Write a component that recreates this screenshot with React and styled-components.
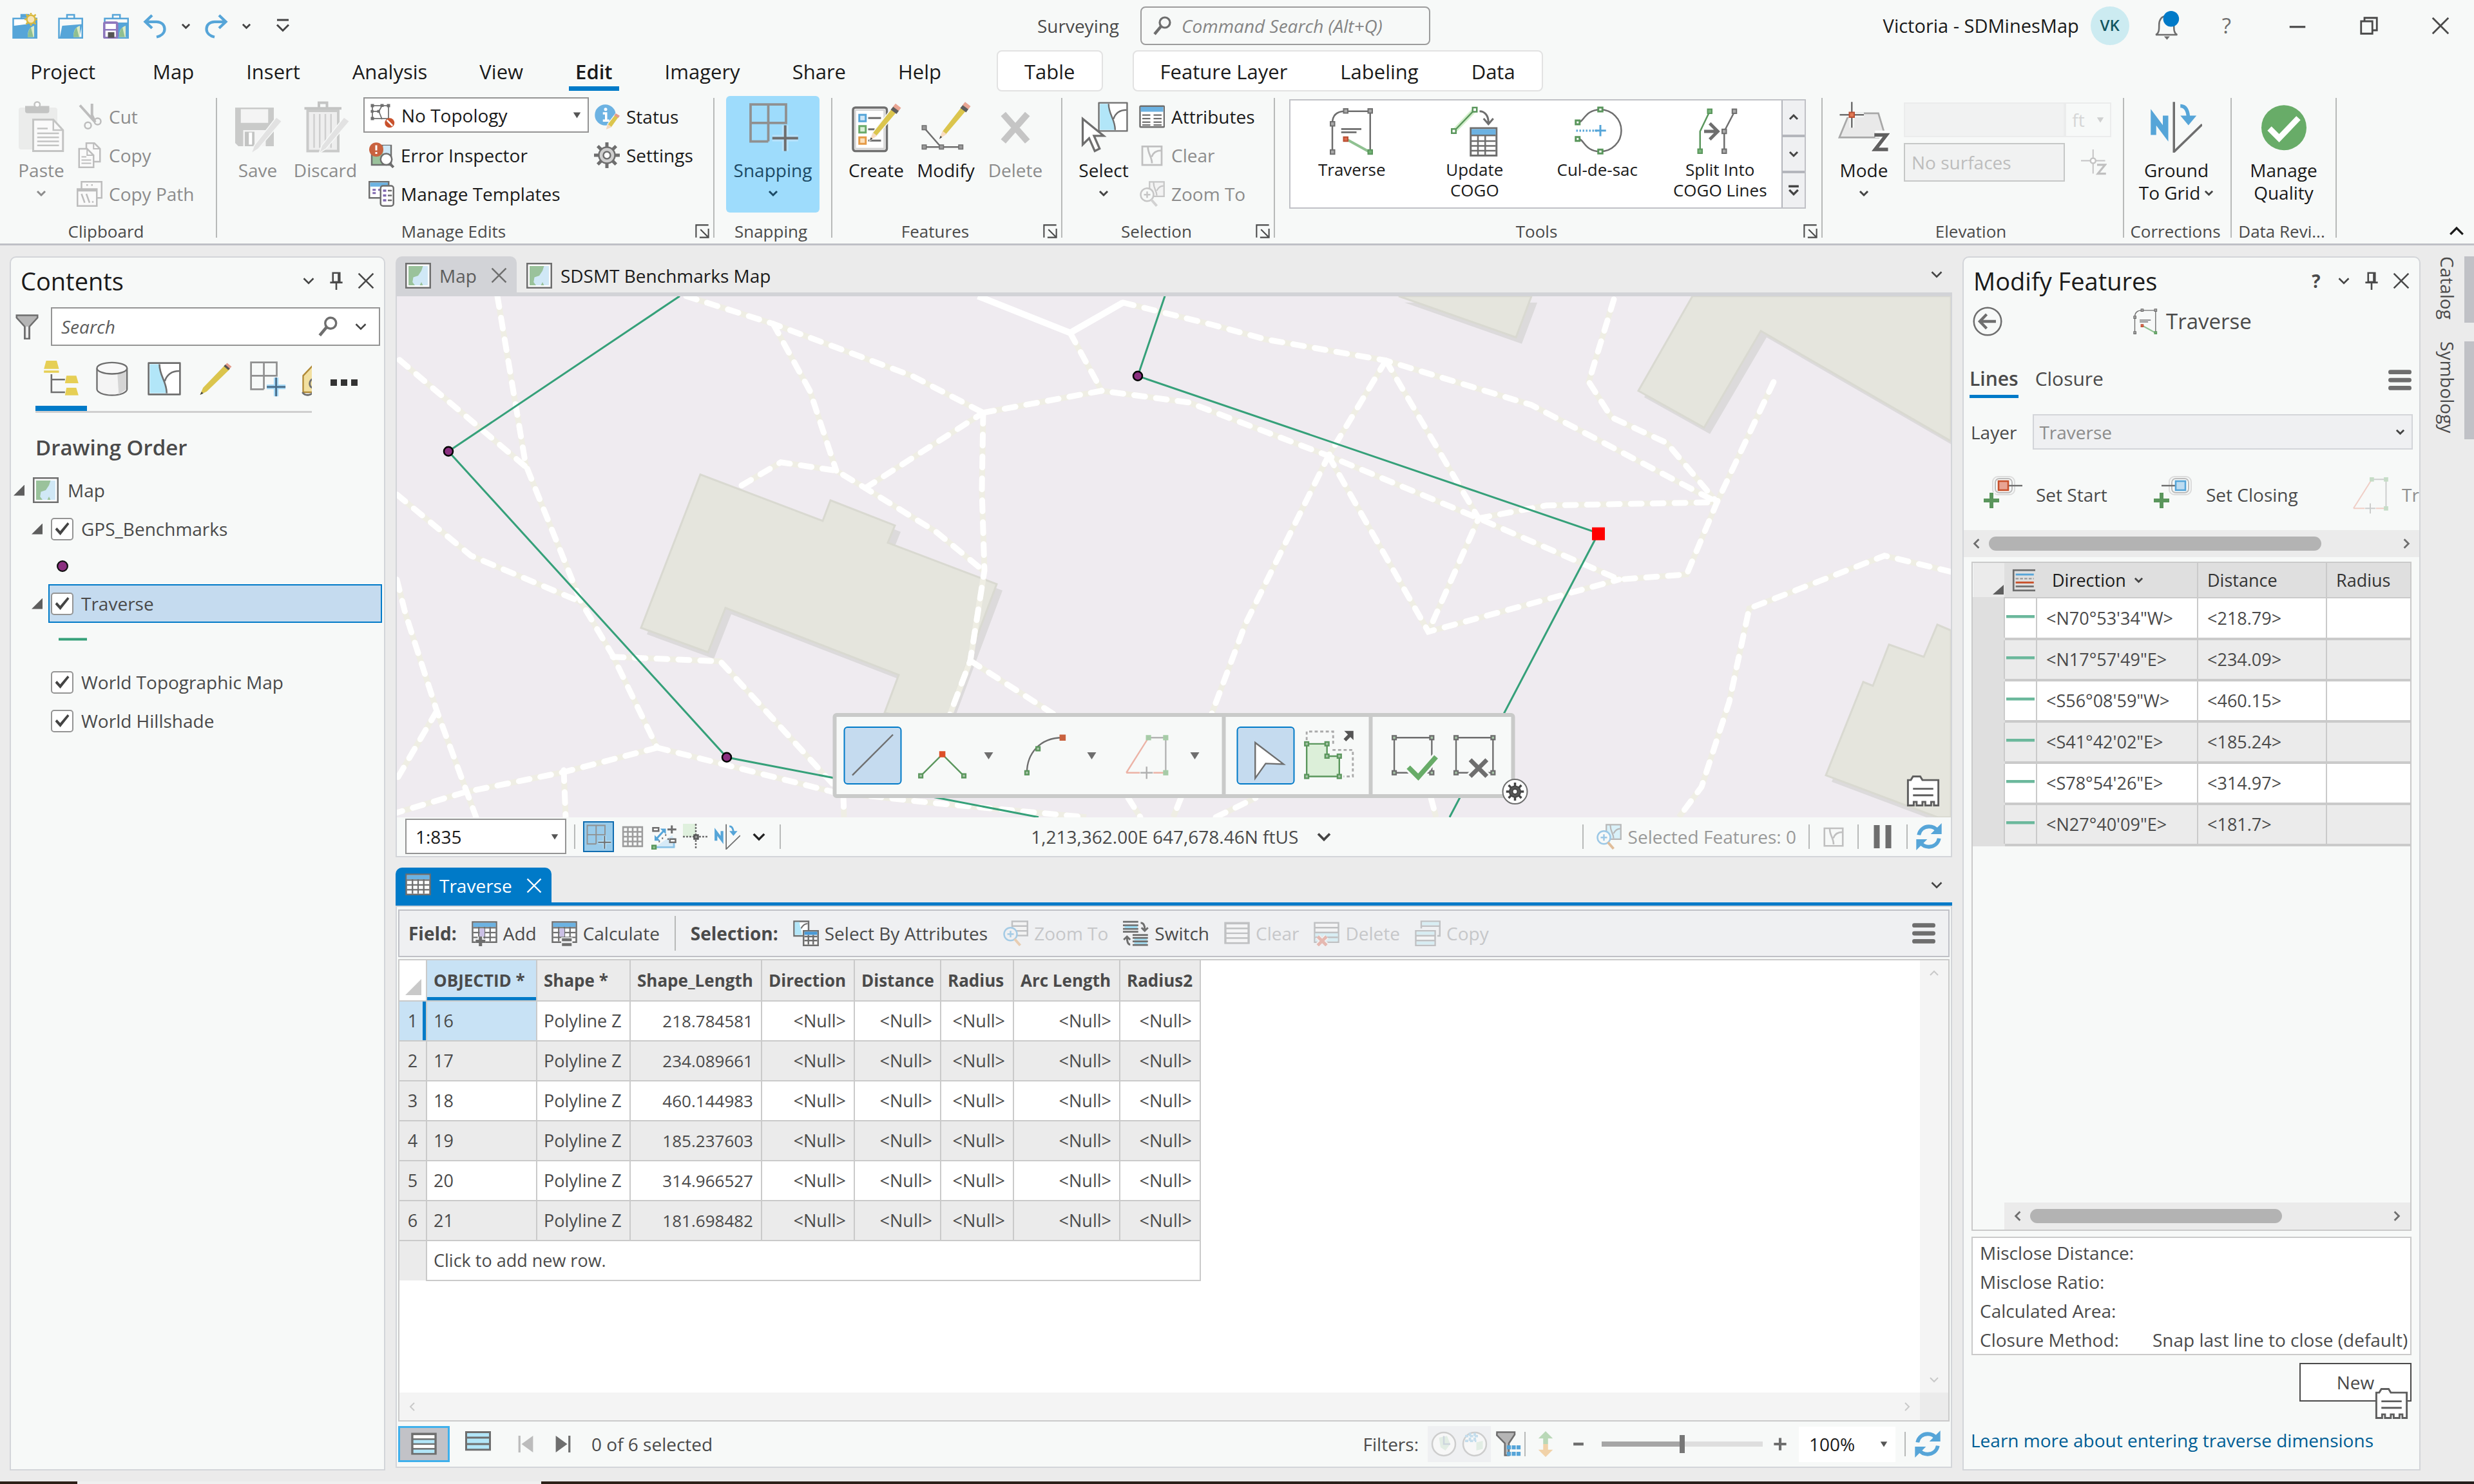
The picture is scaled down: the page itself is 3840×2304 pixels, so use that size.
import React from 'react';
import styled, { createGlobalStyle, css } from 'styled-components';

const G = '#6e6e6e';
const BLUE = '#007ac8';
const SKY = '#56a5d8';
const GREEN = '#5a965c';
const TEAL = '#35a079';

const GlobalStyle = createGlobalStyle`
  * { box-sizing: border-box; }
  body {
    margin: 0;
    background: #ebebeb;
    color: #4a4a4a;
    font-family: "Open Sans", "Noto Sans", sans-serif;
    font-size: 28px;
    line-height: 36px;
  }
  button, input, select {
    margin: 0;
    padding: 0;
    border: 0;
    background: none;
    color: inherit;
    font: inherit;
    white-space: nowrap;
  }
  svg { display: block; flex: none; }
`;

/* ---------- icons ---------- */

const IconSvg = styled.svg`
  width: ${p => p.$size}px;
  height: ${p => p.$size}px;
`;

const Icon = ({ size = 40, box = 16, children }) => (
  <IconSvg $size={size} viewBox={`0 0 ${box} ${box}`} fill="none" aria-hidden="true">{children}</IconSvg>
);

const Chevron = ({ size = 20, dir = 0, color = '#444', width = 2 }) => (
  <Icon size={size} box={16}>
    <path d="M2 5l6 6 6-6" stroke={color} strokeWidth={width} transform={`rotate(${dir} 8 8)`} />
  </Icon>
);
const Caret = ({ size = 14, color = '#555' }) => (
  <Icon size={size}><path d="M1 3h14l-7 11z" fill={color} /></Icon>
);
const Cross = ({ size = 26, color = '#4a4a4a' }) => (
  <Icon size={size}><path d="M1 1l14 14M15 1L1 15" stroke={color} strokeWidth="1.6" /></Icon>
);
const Pin = () => (
  <Icon size={28}><path d="M5 1h6v8H5zM2.500 9.500h11M8 9.500V16M10 1v8" stroke="#4a4a4a" strokeWidth="1.500" /></Icon>
);
const Magnifier = ({ size = 34 }) => (
  <Icon size={size}><circle cx="10" cy="5.500" r="4" stroke={G} strokeWidth="1.600" /><path d="M7 8.500L2 14.500" stroke={G} strokeWidth="2.200" /></Icon>
);
const MapIcon = ({ size = 40 }) => (
  <Icon size={size}>
    <path d="M.5.5h15v15H.5z" fill="#fff" stroke={G} />
    <path d="M2 2h12v12H2z" fill="#9ac29b" />
    <path d="M14 2h-3l-1 3-2 3-3 1-.5 3 1.500 2h3l1-2 1 2h3z" fill="#d0e8f6" />
  </Icon>
);
const Funnel = ({ size = 40 }) => (
  <Icon size={size}><path d="M1.500 1h13v1.500L9.500 8v7.500h-3V8l-5-5.500z" fill="#b5b5b5" stroke={G} /><path d="M7.500 8h1v7h-1z" fill="#fff" /></Icon>
);
const Hamburger = () => (
  <Icon size={36}><path d="M1.500 2.500h13M1.500 8h13M1.500 13.500h13" stroke={G} strokeWidth="3" strokeLinecap="round" /></Icon>
);
const Project = ({ kind }) => (
  <Icon>
    <path d="M6 3V1.200h4.500V3M1 3.500h14.500v12H1z" fill={kind === 'new' ? SKY : '#f7f9f8'} stroke={SKY} />
    {kind === 'open' && <path d="M3 8l12.500-1-2 8.500H1.500z" fill={SKY} />}
    {kind === 'save' && <path d="M8 6h7.500v9H8z" fill={SKY} />}
    <path d="M10 15c0-4 1-6 4-7v7z" fill="#dcebc6" /><path d="M10 15c0-3 1-5 2-6l1.500 6z" fill="#8fbf90" />
    {kind === 'new' && <g><path d="M1.500 4h8v3l-8 1z" fill="#fff" /><circle cx="12" cy="4" r="2.600" fill="#f8e5b5" stroke="#d9b93e" /><path d="M12 0v1M12 7v1M8 4h1M15 4h1M9 1l1 1M15 1l-1 1M9 7l1-1M15 7l-1-1" stroke="#d9b93e" /></g>}
    {kind === 'save' && <g><rect x=".7" y="6" width="8" height="9.500" rx=".8" fill="#fff" stroke="#8e78bd" strokeWidth="1.500" /><path d="M1 10.500h7.500" stroke="#8e78bd" /><path d="M3 12h4v3.500H3z" fill="#555" /></g>}
  </Icon>
);
const Undo = ({ flip }) => (
  <Icon size={40}><g transform={flip ? 'translate(16 0) scale(-1 1)' : ''}><path d="M6 1.500L1.800 5.500 6 9.500M2.300 5.500h6.500c3 0 5 2 5 4.500s-2 4.300-5 5" stroke={SKY} strokeWidth="1.700" /></g></Icon>
);
const Bell = () => (
  <Icon size={46} box={18}>
    <path d="M2 14.500c2-1 2-3 2-6 0-3 1.500-5.500 4.500-5.500s4.500 2.500 4.500 5.500c0 3 0 5 2 6z" stroke={G} strokeWidth="1" />
    <path d="M7 15.500h3.500l-1.700 2z" fill={G} /><circle cx="11.300" cy="4.800" r="4.800" fill={BLUE} />
  </Icon>
);
const Restore = () => <Icon size={28}><path d="M1 4h10v11H1zM4 4V1h11v11h-4" stroke="#4a4a4a" strokeWidth="1.600" /></Icon>;
const Launcher = () => <Icon size={22}><path d="M15 1H1v14M15 5v10H5M6 6l8 8" stroke="#4a4a4a" strokeWidth="1.500" /></Icon>;

const PencilShape = ({ faded }) => (
  <g>
    <path d="M27.500 2L31 4.500 16.500 21.500 12 24.500l1.800-5z" fill={faded ? '#e2e2e2' : '#dbc54d'} stroke="#f7f9f8" strokeWidth=".6" />
    {!faded && <g><path d="M26.300 3.600l3.600 2.600 1.500-2L28 1.500z" fill="#e9a593" /><path d="M25 5.300l3.600 2.700 1.400-1.900-3.500-2.600z" fill="#5e5e5e" /><path d="M14 19.500l2.500 2-4.500 3z" fill="#f8dcc0" /><path d="M12.700 22.500l1 .9-1.700 1.100z" fill="#444" /></g>}
  </g>
);
const PasteIcon = () => (
  <Icon size={80} box={32}>
    <rect x="2" y="4" width="24" height="26" rx="1.500" fill="#ebeceb" /><path d="M6 3h15v3q0 1.500-1.500 1.500h-12Q6 7.500 6 6z" fill="#c3c4c3" /><circle cx="13.500" cy="2.200" r="1.700" fill="#fff" stroke="#c3c4c3" />
    <path d="M11 11.500h12.500l6 6.500v13H11z" fill="#fafafa" stroke="#c3c4c3" strokeWidth="1.200" /><path d="M23.500 11.500V18h6M13.500 17H20M13.500 20H27M13.500 22.500H27M13.500 25H27M13.500 27.500H27" stroke="#c3c4c3" />
  </Icon>
);
const CutIcon = () => <Icon><path d="M2 1l9 10M9.500 0v7l2 4.500" stroke="#bdbdbd" strokeWidth="1.600" /><circle cx="7" cy="13.500" r="2" stroke="#bdbdbd" /><circle cx="13" cy="11" r="2" stroke="#bdbdbd" /></Icon>;
const CopyIcon = () => (
  <Icon><path d="M6 .5h5L14.500 4v8H6z" fill="#fafafa" stroke="#bdbdbd" /><path d="M1.500 4h5L10.500 8v7.500h-9z" fill="#fafafa" stroke="#bdbdbd" /><path d="M6.500 4v4h4M3 9h3M3 11h6M3 13h6M10.500.5V4h4" stroke="#bdbdbd" strokeWidth=".8" /></Icon>
);
const CopyPathIcon = () => (
  <Icon><path d="M3 .5h12.500v10H3z" fill="#fafafa" stroke="#bdbdbd" /><path d="M.5 5h12v10.500H.5zM.5 6h12" fill="#fafafa" stroke="#bdbdbd" /><path d="M3 8l2 5.500M6 8l2 5.500M9.500 13h1M6 2.500h1M9 2.500h1" stroke="#bdbdbd" /></Icon>
);
const SaveIcon = () => (
  <Icon size={80} box={32}>
    <path d="M2 4h24v24H4l-2-2z" fill="#c9cac9" /><path d="M5.500 5h17v8.500h-17zM7 18h14v10H7z" fill="#f4f4f4" /><path d="M8 19h6v9H8z" fill="#c3c4c3" /><path d="M10.500 19.500h2V27h-2z" fill="#fff" />
    <g transform="translate(0 8)"><PencilShape faded /></g>
  </Icon>
);
const DiscardIcon = () => (
  <Icon size={80} box={32}>
    <path d="M3 4.500h23M12 4V1h5v3" stroke="#c3c4c3" strokeWidth="1.600" /><path d="M5 6h19v25H5z" fill="#eee" stroke="#c9cac9" strokeWidth="1.600" /><path d="M9 8v21M12.500 8v21M16 8v21M19.500 8v21" stroke="#cfcfcf" />
    <g transform="translate(0 8)"><PencilShape faded /></g>
  </Icon>
);
const TopologyIcon = () => (
  <Icon><path d="M2 2h10v8H2zM2 5.500h4L8 2M6 5.500l2 5" stroke={G} strokeWidth=".7" /><path d="M1 1h2v2H1zM11 1h2v2h-2zM1 9h2v2H1zM1 4.700h1.700v1.700H1zM7 1h2v1.800H7zM5 4.700h1.700v1.700H5z" fill={G} /><circle cx="12.700" cy="12.700" r="3" fill="#c8512c" /><path d="M11 11l3.500 3.500" stroke="#fff" /></Icon>
);
const ErrorIcon = () => (
  <Icon><path d="M2 2h12v12H2z" fill="#9ac29b" stroke={G} /><path d="M9 2h4.500v6L9 9z" fill="#d0e8f6" /><circle cx="11" cy="10.500" r="3.500" fill="#fff" stroke={G} /><path d="M13 13l2.500 2.500" stroke={G} strokeWidth="1.600" /><circle cx="4.800" cy="4.500" r="4.400" fill="#c9623f" /><path d="M4.800 1.800V5M4.800 6v1.200" stroke="#fff" strokeWidth="1.200" /></Icon>
);
const TemplatesIcon = () => (
  <Icon><path d="M.5.5h12v10H.5z" fill="#fff" stroke={G} /><path d="M1 1h11v2.500H1z" fill="#6cb2e2" /><path d="M2.500 5.500h2M2.500 7.500h2M6 5.500h2" stroke="#8068b0" strokeWidth="1.200" /><rect x="7.500" y="3" width="8" height="12.500" rx="1.500" fill="#fff" stroke={G} /><path d="M9 6h2M9 9h2M9 12h2" stroke="#8068b0" strokeWidth="1.400" /><path d="M12 6h2.500M12 9h2.500M12 12h2.500" stroke={G} /></Icon>
);
const StatusIcon = () => (
  <Icon><circle cx="7" cy="7" r="6.500" fill="#6cb2e2" /><path d="M5.500 6H7.500v4.500M5.500 10.500h4" stroke="#fff" strokeWidth="1.400" /><circle cx="7.200" cy="3.500" r="1" fill="#fff" /><path d="M13.500 6l2.500 1.500-5 7-3.500 1.500 1-3.500z" fill="#dbc54d" stroke="#f7f9f8" strokeWidth=".5" /><path d="M13.500 6L16 7.500l-1 1.400-2.500-1.600z" fill="#e39b8a" /><path d="M8.500 12.500l2.500 2-3.500 1.500z" fill="#f6d9bd" /></Icon>
);
const Gear = ({ size = 40, fill = '#cfcfcf', stroke = G }) => (
  <Icon size={size}>
    <path d="M8 0v16M0 8h16M2.300 2.300l11.400 11.400M13.700 2.300L2.300 13.700" stroke={stroke} strokeWidth="2" /><circle cx="8" cy="8" r="5" fill={fill} stroke={stroke} /><circle cx="8" cy="8" r="2.200" fill="#fff" stroke={stroke} />
  </Icon>
);
const SnapIcon = ({ size = 80, plus = G, halo = '#b9e3fb' }) => (
  <Icon size={size} box={32}>
    <path d="M2 2h22v11.500H2zM13 2v23M2 13.500V25h11" stroke="#909090" strokeWidth="1.500" />
    <path d="M23.500 15v16M15.500 23h16" stroke={halo} strokeWidth="4" /><path d="M23.500 15v16M15.500 23h16" stroke={plus} strokeWidth="1.600" />
  </Icon>
);
const CreateIcon = () => (
  <Icon size={80} box={32}>
    <rect x="1.600" y="4" width="21" height="27" rx="1.500" fill="#fff" stroke={G} strokeWidth="1.400" /><rect x="3" y="5.500" width="18" height="24" stroke="#d5d5d5" />
    <rect x="5.500" y="8.500" width="4" height="4" fill="#cfe7f7" stroke={SKY} strokeWidth="1.200" /><rect x="5.500" y="15.500" width="4" height="4" fill="#d8efd6" stroke="#6aa968" strokeWidth="1.200" /><rect x="5.500" y="22.500" width="4" height="4" fill="#fbe0bb" stroke="#e59b47" strokeWidth="1.200" />
    <path d="M11 10.500h8M11 17.500h4M11 24.500h8" stroke={G} strokeWidth="1.200" /><PencilShape />
  </Icon>
);
const ModifyIcon = () => (
  <Icon size={80} box={32}>
    <path d="M2.500 16.500L13 28.500M2.500 28.500H25" stroke={G} /><path d="M1.300 15.200h2.600v2.600H1.300zM1.300 27.200h2.600v2.600H1.300zM12 27.200h2.600v2.600H12zM24 27.200h2.600v2.600H24z" fill="#999" stroke={G} strokeWidth=".6" /><g transform="translate(0 -1)"><PencilShape /></g>
  </Icon>
);
const DeleteIcon = () => <Icon size={80} box={32}><path d="M8.500 8l15 17M23.500 8l-15 17" stroke="#c5c5c5" strokeWidth="4" /></Icon>;
const SelectShape = () => (
  <g><path d="M1.500 1.500h13v13h-13z" fill="#fff" stroke={G} strokeWidth=".7" strokeLinejoin="round" /><path d="M2 2h4c0 5 3 7 3 12H2z" fill="#b2e6f8" /><path d="M6 2c0 5 3 7 3 12M8.200 9c1-3 3-4.200 6-4.200" stroke={G} strokeWidth=".7" /></g>
);
const SelectIcon = () => (
  <Icon size={80} box={32}><g transform="translate(11 -1) scale(1.350)"><SelectShape /></g><path d="M3 11v16l4-4 3.500 8 3-1.500L10 21.500h6z" fill="#fff" stroke={G} strokeWidth="1.300" /></Icon>
);
const AttributesIcon = () => (
  <Icon><rect x=".6" y="1.500" width="15" height="13" rx=".5" fill="#fff" stroke={G} /><path d="M1 2h14v3H1z" fill="#6cb2e2" /><path d="M2 7h5M9 7h5M2 9.200h5M9 9.200h5M2 11.400h5M9 11.400h5M2 13.200h5M9 13.200h5" stroke={G} strokeWidth=".9" /></Icon>
);
const ClearSelIcon = ({ size = 40 }) => (
  <Icon size={size}><path d="M2 2.500h12v11.500H2zM5.500 3c0 4 2.500 6 2.500 10M7.800 9c1-3 3-4 6-4" stroke="#c0c0c0" strokeWidth="1.100" /></Icon>
);
const ZoomToIcon = ({ color = '#c6c6c6', fill = '#f3f3f3', glass = '#c6c6c6', handle = '#d2d2d2' }) => (
  <Icon><path d="M6.500.5h9v9h-9zM9 1c0 4 2 5 2 8M11 6c1-2 2-3 4-3" fill={fill} stroke={color} strokeWidth=".9" /><circle cx="5" cy="8.500" r="4" fill="#f7f9f8" stroke={glass} /><path d="M5 6.500v4M3 8.500h4" stroke={glass} /><path d="M7.500 11.500l3.500 4" stroke={handle} strokeWidth="1.600" /></Icon>
);
const TraverseIcon = ({ size = 76 }) => (
  <Icon size={size} box={32}>
    <path d="M4 29V11q0-7.500 8-7.500h15.500V29" stroke={G} strokeWidth="1" /><path d="M13 21l14.500 8" stroke="#8fc191" strokeWidth="1.600" /><path d="M9.500 14.500H22M9.500 16.500H19" stroke={G} strokeWidth="1.100" />
    <path d="M2.800 10h2.600v2.600H2.800zM2.800 27.500h2.600v2.600H2.800zM11 2h2.600v2.600H11zM26.200 2h2.600v2.600h-2.600z" fill="#aaa" stroke={G} strokeWidth=".8" />
    <path d="M11 19.500h2.600v2.600H11z" fill="#dd6a4d" stroke="#b94f33" strokeWidth=".8" /><path d="M26.200 27.500h2.600v2.600h-2.600z" fill="#72b374" stroke={GREEN} strokeWidth=".8" />
  </Icon>
);
const CogoIcon = () => (
  <Icon size={80} box={32}>
    <path d="M3 16L16 2.500" stroke="#d3efcc" strokeWidth="3" /><path d="M3 16L16 2.500" stroke={GREEN} /><path d="M1.700 14.500h2.600v2.600H1.700zM14.700 1.200h2.600v2.600h-2.600z" fill="#fff" stroke={GREEN} />
    <path d="M19 3.500c3.500 0 5.500 3 5.500 7M21.500 8l3 3.500 3-3.500" stroke={G} strokeWidth="1.200" /><rect x="13.500" y="14" width="16" height="17" fill="#fff" stroke={G} strokeWidth="1.200" /><path d="M14 14.600h15V18H14z" fill="#6cb2e2" /><path d="M14 18.500h15M14 22h15M14 25h15M14 28h15M18 18v13M22.500 18v13" stroke={G} />
  </Icon>
);
const CulDeSacIcon = () => (
  <Icon size={80} box={32}>
    <path d="M4 10.500c4 0 4-8 14-8a13 13 0 0 1 0 26c-10 0-10-8-14-8" stroke={G} /><path d="M2.700 9.200h2.400v2.400H2.700zM2.700 19.500h2.400v2.400H2.700zM16.700 1.200h2.600v2.400h-2.600zM16.700 27.300h2.600v2.400h-2.600z" fill="#fff" stroke={GREEN} strokeWidth="1.200" />
    <path d="M3 15.500h13" stroke={SKY} strokeWidth="1.300" strokeDasharray="1 1" /><path d="M18 12v7M14.500 15.500h7" stroke={SKY} strokeWidth="1.200" />
  </Icon>
);
const SplitIcon = () => (
  <Icon size={80} box={32}>
    <path d="M9.500 3.500L3.500 16v13" stroke={GREEN} /><path d="M8.200 2.200h2.600v2.600H8.200zM2.200 27h2.600v2.600H2.200z" fill="#7bb77d" stroke={GREEN} strokeWidth=".8" />
    <path d="M25 3.500L18.500 16v13" stroke={G} /><path d="M23.500 2.200h2.600v2.600h-2.600zM17.200 14.700h2.600v2.600h-2.600zM17.200 27h2.600v2.600h-2.600z" fill="#aaa" stroke={G} strokeWidth=".8" /><path d="M6 16h8.500M9.500 11l5 5-5 5" stroke={G} strokeWidth="2" />
  </Icon>
);
const ModeIcon = () => (
  <Icon size={80} box={32}>
    <path d="M7 7.500h18l4.500 15H.8z" fill="#e9e9e9" stroke="#a8a8a8" strokeWidth="1.100" /><path d="M8.500.5v16M1 8.500h15" stroke="#f7f9f8" strokeWidth="3" /><path d="M8.500.5v16M1 8.500h15" stroke={G} /><path d="M7 7h3v3H7z" fill="#e07a55" stroke="#b94f33" strokeWidth=".8" />
    <path d="M23 20.500h7L23.500 30.500h7.500" stroke="#fff" strokeWidth="4.500" /><path d="M22.500 21h7.500L23 30h8" stroke="#606060" strokeWidth="2.200" />
  </Icon>
);
const ZPointIcon = () => <Icon><path d="M7.500 0v15M0 7h15" stroke="#c4c4c4" strokeWidth=".8" /><circle cx="7.500" cy="7" r="1.600" fill="#fff" stroke="#c4c4c4" /><path d="M10 9.500h5L10.500 15H15.500" stroke="#c0c0c0" strokeWidth="1.300" /></Icon>;
const NorthIcon = ({ size = 80 }) => (
  <Icon size={size} box={32}>
    <path d="M1.800 21V10l7.500 10V9" stroke={SKY} strokeWidth="3.400" /><path d="M14.500.5v31L32 14.500" stroke={G} strokeWidth="1.400" /><path d="M18.500 3c4 0 5 4 5 9" stroke={SKY} strokeWidth="2.200" /><path d="M18.500 9l5 6 5-6z" fill={SKY} />
  </Icon>
);
const QualityIcon = () => <Icon size={80} box={32}><circle cx="16" cy="16.500" r="14" fill="#68ac68" /><path d="M7 17l6 6L25 10.500" stroke="#fff" strokeWidth="3.600" /></Icon>;

const TreeIcon = () => (
  <Icon size={56} box={24}><path d="M2 0h7l1.500 5.500H.5zM.5 6.500h10V8H.5zM15.500 10H22l1.500 5H14.500zM15.500 18H22l1.500 5H14.500z" fill="#e6cf55" /><path d="M5.500 9v12h9M5.500 12.500h9" stroke={G} strokeWidth="1.100" /></Icon>
);
const CylinderIcon = () => (
  <Icon size={56} box={24}><path d="M1.500 5v14c0 2 4 4 10 4s10-2 10-4V5" fill="#f4f4f4" stroke={G} /><path d="M15 7l6-1.500V19l-5 3.500z" fill="#d5d5d5" /><ellipse cx="11.500" cy="5" rx="10" ry="3.800" fill="#f8f8f8" stroke={G} /></Icon>
);
const PencilIcon = () => <Icon size={56} box={24}><path d="M18 3l3.500 2.500L6 20.500l-4.500 2.200L3.500 18z" fill="#dbc54d" /><path d="M19.500 1.500L22.500 4 21 5.500 18 3z" fill="#e39b8a" /><path d="M17.300 3.600l3 2.600 1-1-3-2.600z" fill="#555" /><path d="M1.500 22.700l1-2 1.200 1z" fill="#444" /></Icon>;
const LabelIcon = () => <Icon size={56} box={24}><path d="M10 1L1.500 10v11h10l9-9V3z" fill="#f2e0a0" stroke="#b18a37" /><path d="M9 12c-4 0-4 6-1 6M8 12v8c0 3-5 4-7 1" stroke={G} strokeWidth="1.200" /></Icon>;

const SmallTable = ({ mark }) => (
  <Icon>
    <path d="M.6 1h14.800v12.500H.6z" fill="#fff" stroke={G} /><path d="M1 1.500h14V4H1z" fill="#6cb2e2" /><path d="M1 4.500h14M1 7.500h14M1 10.500h14M4.500 4v9M8 4v9M11.500 4v9" stroke={G} strokeWidth=".9" />
    {mark && <path d="M5 5h3v5H5z" fill="#cabfe4" />}
    {mark === 'add' && <path d="M5.500 10v6M2.500 13h6" stroke="#eff0f2" strokeWidth="3.500" />}
    {mark === 'add' && <path d="M5.500 10v6M2.500 13h6" stroke={G} strokeWidth="2" />}
    {mark === 'calc' && <path d="M6 10.500h7v6H6z" fill="#eff0f2" />}
    {mark === 'calc' && <path d="M6.500 12h6M6.500 15h6" stroke={G} strokeWidth="1.800" />}
  </Icon>
);
const SelectAttrIcon = () => (
  <Icon><path d="M.6.600h9v9h-9z" fill="#fff" stroke={G} /><path d="M1 1h3c0 3 1.500 5 1.500 8H1z" fill="#b2e6f8" /><path d="M5 5c1-2 2-3 4-3" stroke={G} strokeWidth=".8" /><path d="M6.500 6.500h9v9h-9z" fill="#fff" stroke={G} /><path d="M7 7h8v2H7z" fill="#4a9ad6" /><path d="M7 10h8M7 12.500h8M9.500 9v6M12.500 9v6" stroke={G} /></Icon>
);
const ZoomRowsIcon = () => (
  <Icon><path d="M6 .6h9.500v8.800H6zM6 3.500h9.500M6 6.500h9.500" fill="#f3f3f3" stroke="#c0c1c3" /><circle cx="5" cy="8.500" r="4" fill="#eff0f2" stroke="#a5cbe5" /><path d="M5 6.500v4M3 8.500h4" stroke="#a5cbe5" /><path d="M7.500 11.500l3.500 4" stroke="#e8cdb2" strokeWidth="1.600" /></Icon>
);
const SwitchIcon = () => (
  <Icon><path d="M0 .8h9.500M0 3h9.500M0 5.200h9.500M0 7h9.500" stroke={G} strokeWidth="1.100" /><path d="M1 3.500h8v1.300H1zM7 11h8v1.300H7zM7 13.400h8v1.300H7z" fill="#9fdcf2" /><path d="M6 9h9.500M6 10.800h9.500M6 13h9.500M6 15.200h9.500" stroke={G} strokeWidth="1.100" /><path d="M11 1.500c2 0 2.500 2 2.500 4M11.500 4.500l2 2 2-2M4.500 15C3 15 2.500 13 2.500 10M.5 12l2-2 2 2" stroke={G} strokeWidth="1.200" /></Icon>
);
const RowsIcon = ({ rows, color = G }) => (
  <Icon><path d="M.6 1.500h14.800v12.600H.6z" fill="#fff" stroke={color} />{rows.map((fill, i) => <rect key={i} x="1" y={2 + i * 3} width="14" height="3" fill={fill} stroke={color} strokeWidth=".9" />)}</Icon>
);
const DeleteRowsIcon = () => (
  <Icon><path d="M.6 1.500h14.800v12H.6zM.6 4.500h14.800M.6 7.500h14.800M.6 10.500h14.800" fill="#f4f4f5" stroke="#c0c1c3" /><path d="M1 8h14v5H1z" fill="#d8edf3" /><path d="M1 10.500h14" stroke="#c0c1c3" /><path d="M2.500 10l5.500 5.500M8 10l-5.500 5.500" stroke="#eff0f2" strokeWidth="3.500" /><path d="M2.500 10l5.500 5.500M8 10l-5.500 5.500" stroke="#e5b8b0" strokeWidth="1.900" /></Icon>
);
const CopyRowsIcon = () => (
  <Icon><path d="M4 5V.6h11.500v9H14M4 3.500h11.500" stroke="#c0c1c3" /><path d="M4.500 1h10.500v2H4.500z" fill="#d8edf3" /><path d="M.6 6.500h12v9H.6z" fill="#f4f4f5" stroke="#c0c1c3" /><path d="M1.100 7h11v2h-11zM1.100 13h11v2h-11z" fill="#d8edf3" /><path d="M.6 9.500h12M.6 12.500h12" stroke="#c0c1c3" /></Icon>
);
const RefreshIcon = () => (
  <Icon size={42}><path d="M2 7c.5-3 3-5 6-5 2.500 0 4 1 5 2.500" stroke={SKY} strokeWidth="2.200" /><path d="M15.500 0v6.500H9z" fill={SKY} /><path d="M14 9c-.5 3-3 5-6 5-2.500 0-4-1-5-2.500" stroke={SKY} strokeWidth="2.200" /><path d="M.5 16V9.500H7z" fill={SKY} /></Icon>
);
const NoteIcon = () => (
  <Icon size={54} box={24}><path d="M1.500 22V4.500h2L5 2h5l1.500 2.500h11V22h-3v-2.500h-2V22h-4v-2.500h-2V22h-4v-2.500h-2V22z" fill="#fff" stroke="#5e5e5e" strokeWidth="1.300" /><path d="M5 10.500h14M5 15h14" stroke="#5e5e5e" strokeWidth="1.300" /></Icon>
);
const GridIcon = () => <Icon size={34}><path d="M1 1h14v14H1zM4.500 1v14M8 1v14M11.500 1v14M1 4.500h14M1 8h14M1 11.500h14" stroke="#9c9c9c" strokeWidth="1.200" /></Icon>;
const DynamicIcon = () => (
  <Icon><path d="M1.500 15L13 7l2 7.500z" fill="#d6eaf7" /><path d="M14 9v5.500H3" stroke="#8cc3e6" strokeWidth="1.100" /><path d="M1 2.500h3.500v2H1zM11.500 9.500H15v2h-3.500z" fill="#fff" stroke={G} /><path d="M10 3.500h5.500M12.700 1v5" stroke={G} strokeWidth="1.200" /><path d="M3 9.500L8 4" stroke={SKY} strokeWidth="1.200" /><path d="M5.500 3H9v3.500zM2 7v3.500h3.500z" fill={SKY} /><path d="M4.500 11h.8M6.500 9h.8M8.500 7h.8M10 9.500h.8" stroke={G} /><path d="M.5 13.500h2.300v2.300H.5z" fill="#8cc08d" stroke={GREEN} /></Icon>
);
const ConstraintIcon = () => <Icon><path d="M0 0h8v8H0z" fill="#dff0dd" /><path d="M8 0v16M0 8h16" stroke={G} strokeDasharray="1.200 .8" /><path d="M7 7h2.400v2.400H7z" fill="#999" stroke="#555" /></Icon>;

/* ---------- title bar and ribbon ---------- */

const Window = styled.div`
  height: 100vh;
  display: flex;
  flex-direction: column;
`;

const TitleBar = styled.header`
  display: grid;
  grid-template-columns: 1fr auto 1fr;
  align-items: center;
  height: 78px;
  padding: 2px 38px 0 18px;
  background: #f7f9f8;
`;

const QuickAccess = styled.div`
  display: flex;
  align-items: center;
  gap: 15px;
`;

const PlainButton = styled.button`
  display: flex;
  align-items: center;
  justify-content: center;
  min-width: ${p => p.$width || 0}px;
`;

const QuickProjects = styled.div`
  display: flex;
  gap: 31px;
  margin-right: 6px;
`;

const TitleCenter = styled.div`
  display: flex;
  align-items: center;
  gap: 33px;
  margin-left: 10px;
`;

const CommandSearch = styled.label`
  display: flex;
  align-items: center;
  gap: 14px;
  width: 450px;
  height: 60px;
  padding: 0 16px;
  border: 2px solid #9c9c9c;
  border-radius: 8px;

  input {
    width: 100%;
    min-width: 0;
    outline: 0;
  }
  input::placeholder {
    color: #858585;
    font-style: italic;
    opacity: 1;
  }
`;

const TitleRight = styled.div`
  display: flex;
  align-items: center;
  justify-content: flex-end;
  color: #1a1a1a;
  font-size: 29px;
`;

const Avatar = styled.span`
  width: 60px;
  height: 60px;
  margin: 0 36px 0 18px;
  border-radius: 50%;
  background: #ccebf1;
  color: #11555f;
  font-size: 24px;
  font-weight: 600;
  line-height: 58px;
  text-align: center;
`;

const WindowControls = styled.div`
  display: flex;
  align-items: center;
  margin-left: 62px;
  gap: 83px;
  color: #6e6e6e;
  font-size: 33px;

  > :first-child { margin-right: 6px; }
`;

const TabStrip = styled.nav`
  display: flex;
  align-items: flex-start;
  height: 71px;
  padding-left: 37px;
  gap: 61px;
  background: #f7f9f8;
  color: #1a1a1a;
  font-size: 31px;

  > :first-child { margin-right: 8px; }
`;

const RibbonTab = styled.button`
  height: 63px;
  padding: 11px 10px 0;
  border-bottom: 7px solid transparent;
  line-height: 45px;
  ${p => p.$active && css`
    border-color: ${BLUE};
    font-weight: 600;
  `}
`;

const TabGroup = styled.div`
  display: flex;
  gap: 62px;
  height: 64px;
  margin-left: ${p => p.$left}px;
  padding: 0 31px;
  background: #fff;
  border: 2px solid #e2e2e2;
  border-radius: 8px;

  > button { margin-top: -2px; }
`;

const Ribbon = styled.section`
  display: flex;
  height: 232px;
  background: #f7f9f8;
  border-bottom: 3px solid #bfc0c6;
  color: #1a1a1a;
`;

const GroupBox = styled.div`
  display: flex;
  flex-direction: column;
  flex: none;
  width: ${p => p.$width}px;
`;

const GroupBody = styled.div`
  display: flex;
  align-items: flex-start;
  height: 183px;
  padding-left: ${p => p.$pad}px;
`;

const GroupLabel = styled.div`
  display: flex;
  align-items: center;
  height: 46px;
  padding: 8px 6px 0 0;
  color: #4a4a4a;
  font-size: 26px;

  span {
    flex: 1;
    text-align: center;
    white-space: nowrap;
  }
  button { margin-left: 8px; }
`;

const Separator = styled.div`
  flex: none;
  width: 2px;
  height: ${p => p.$height || 217}px;
  margin-top: ${p => (p.$height ? 0 : 3)}px;
  background: #b8bab9;
`;

const LargeButton = styled.button`
  display: flex;
  flex-direction: column;
  align-items: center;
  width: ${p => p.$width}px;
  padding-top: 8px;
  color: ${p => (p.disabled ? '#8c8c8c' : p.$active ? '#1c4a66' : '#1a1a1a')};
  line-height: 35px;
  white-space: pre-line;
  ${p => p.$active && css`
    height: 181px;
    background: #9edcfc;
    border-radius: 6px;
  `}

  > svg:first-child { margin-bottom: 10px; }
  > svg + svg { margin-top: 10px; }
`;

const InlineLabel = styled.span`
  display: flex;
  align-items: center;
  gap: 6px;
`;

const SmallColumn = styled.div`
  display: flex;
  flex-direction: column;
  padding-top: ${p => p.$top || 2}px;
  margin-left: ${p => p.$left || 0}px;
`;

const SmallButton = styled.button`
  display: flex;
  align-items: center;
  gap: 10px;
  height: 60px;
  padding-left: ${p => p.$pad || 0}px;
  color: ${p => (p.disabled ? '#8c8c8c' : '#1a1a1a')};
`;

const SelectBox = styled.div`
  display: flex;
  align-items: center;
  gap: 10px;
  width: ${p => (p.$width ? `${p.$width}px` : 'auto')};
  flex: ${p => (p.$width ? 'none' : 1)};
  height: 55px;
  padding: 0 10px 0 ${p => p.$pad || 8}px;
  background: ${p => p.$bg || '#fff'};
  border: 2px solid ${p => p.$border || '#949494'};
  color: ${p => p.$color || '#1a1a1a'};

  select {
    flex: 1;
    min-width: 0;
    appearance: none;
    opacity: 1;
  }
`;

const TopologySlot = styled.div`
  height: 60px;
`;

const Gallery = styled.div`
  display: flex;
  width: 802px;
  height: 170px;
  margin-top: 5px;
  background: #fff;
  border: 2px solid #c0c1c6;
`;

const GalleryItem = styled.button`
  display: flex;
  flex-direction: column;
  align-items: center;
  flex: 1;
  padding-top: 8px;
  font-size: 26px;
  line-height: 32px;
  white-space: pre-line;

  svg { margin-bottom: 3px; }
`;

const GallerySide = styled.div`
  display: grid;
  grid-template-rows: 1fr 1fr 1fr;
  gap: 4px;
  width: 36px;
  border-left: 2px solid #b4b6bc;
  background: #b4b6bc;

  button {
    display: grid;
    place-content: center;
    justify-items: center;
    background: #eff0f2;
  }
`;

const FieldRow = styled.div`
  display: flex;
  align-items: center;

  & + & { margin-top: 9px; }
`;

const ElevationInput = styled.input`
  width: 250px;
  height: ${p => p.$height}px;
  padding-left: 10px;
  border: 2px solid ${p => p.$border};
  background: #f1f2f2;

  &::placeholder { color: #bdbdbd; opacity: 1; }
`;

const UnitBox = styled.div`
  display: flex;
  align-items: center;
  justify-content: center;
  gap: 18px;
  width: 72px;
  height: 54px;
  border: 2px solid #ebecec;
  color: #d5d6d6;
`;

const CollapseButton = styled.button`
  align-self: flex-end;
  margin: 0 14px 6px auto;
`;

function RibbonGroup({ width, pad = 0, label, launcher, children }) {
  return (
    <>
      <GroupBox $width={width}>
        <GroupBody $pad={pad}>{children}</GroupBody>
        <GroupLabel>
          <span>{label}</span>
          {launcher && <PlainButton aria-label={`${label} options`}><Launcher /></PlainButton>}
        </GroupLabel>
      </GroupBox>
      <Separator />
    </>
  );
}

function Header() {
  return (
    <>
      <TitleBar>
        <QuickAccess>
          <QuickProjects>
            <PlainButton aria-label="New project"><Project kind="new" /></PlainButton>
            <PlainButton aria-label="Open project"><Project kind="open" /></PlainButton>
            <PlainButton aria-label="Save project"><Project kind="save" /></PlainButton>
          </QuickProjects>
          <PlainButton aria-label="Undo"><Undo /></PlainButton>
          <PlainButton aria-label="Undo list" $width={24}><Chevron size={15} width={3} /></PlainButton>
          <PlainButton aria-label="Redo"><Undo flip /></PlainButton>
          <PlainButton aria-label="Redo list" $width={24}><Chevron size={15} width={3} /></PlainButton>
          <PlainButton aria-label="Customize" $width={60}>
            <Icon size={24}><path d="M2 2h12M2 7l6 6 6-6" stroke="#444" strokeWidth="2" /></Icon>
          </PlainButton>
        </QuickAccess>
        <TitleCenter>
          <span>Surveying</span>
          <CommandSearch>
            <Magnifier size={32} />
            <input aria-label="Command Search" placeholder="Command Search (Alt+Q)" />
          </CommandSearch>
        </TitleCenter>
        <TitleRight>
          <span>Victoria - SDMinesMap</span>
          <Avatar>VK</Avatar>
          <PlainButton aria-label="Notifications"><Bell /></PlainButton>
          <WindowControls>
            <PlainButton aria-label="Help">?</PlainButton>
            <PlainButton aria-label="Minimize"><Icon size={28}><path d="M1 9h14" stroke="#4a4a4a" strokeWidth="1.800" /></Icon></PlainButton>
            <PlainButton aria-label="Restore"><Restore /></PlainButton>
            <PlainButton aria-label="Close"><Cross size={28} /></PlainButton>
          </WindowControls>
        </TitleRight>
      </TitleBar>
      <TabStrip>
        {['Project', 'Map', 'Insert', 'Analysis', 'View', 'Edit', 'Imagery', 'Share', 'Help'].map(name => (
          <RibbonTab key={name} $active={name === 'Edit'}>{name}</RibbonTab>
        ))}
        <TabGroup $left={15}><RibbonTab>Table</RibbonTab></TabGroup>
        <TabGroup $left={-15}>
          <RibbonTab>Feature Layer</RibbonTab>
          <RibbonTab>Labeling</RibbonTab>
          <RibbonTab>Data</RibbonTab>
        </TabGroup>
      </TabStrip>
    </>
  );
}

function EditRibbon() {
  return (
    <Ribbon>
      <RibbonGroup width={335} pad={14} label="Clipboard">
        <LargeButton disabled $width={100}><PasteIcon />Paste<Chevron size={16} width={3} color="#8c8c8c" /></LargeButton>
        <SmallColumn $left={5}>
          <SmallButton disabled><CutIcon />Cut</SmallButton>
          <SmallButton disabled><CopyIcon />Copy</SmallButton>
          <SmallButton disabled><CopyPathIcon />Copy Path</SmallButton>
        </SmallColumn>
      </RibbonGroup>
      <RibbonGroup width={770} pad={14} label="Manage Edits" launcher>
        <LargeButton disabled $width={98}><SaveIcon />Save</LargeButton>
        <LargeButton disabled $width={112}><DiscardIcon />Discard</LargeButton>
        <SmallColumn $left={3}>
          <TopologySlot>
            <SelectBox $width={350} $pad={7}>
              <TopologyIcon />
              <select aria-label="Topology" defaultValue="No Topology"><option>No Topology</option></select>
              <Caret size={13} />
            </SelectBox>
          </TopologySlot>
          <SmallButton $pad={8}><ErrorIcon />Error Inspector</SmallButton>
          <SmallButton $pad={8}><TemplatesIcon />Manage Templates</SmallButton>
        </SmallColumn>
        <SmallColumn $left={8}>
          <SmallButton><StatusIcon />Status</SmallButton>
          <SmallButton><Gear />Settings</SmallButton>
        </SmallColumn>
      </RibbonGroup>
      <RibbonGroup width={181} pad={18} label="Snapping">
        <LargeButton $active $width={145}><SnapIcon />Snapping<Chevron size={16} width={3} color="#1c4a66" /></LargeButton>
      </RibbonGroup>
      <RibbonGroup width={355} pad={14} label="Features" launcher>
        <LargeButton $width={108}><CreateIcon />Create</LargeButton>
        <LargeButton $width={108}><ModifyIcon />Modify</LargeButton>
        <LargeButton disabled $width={108}><DeleteIcon />Delete</LargeButton>
      </RibbonGroup>
      <RibbonGroup width={328} pad={14} label="Selection" launcher>
        <LargeButton $width={100}><SelectIcon />Select<Chevron size={16} width={3} /></LargeButton>
        <SmallColumn $left={5}>
          <SmallButton><AttributesIcon />Attributes</SmallButton>
          <SmallButton disabled><ClearSelIcon />Clear</SmallButton>
          <SmallButton disabled><ZoomToIcon />Zoom To</SmallButton>
        </SmallColumn>
      </RibbonGroup>
      <RibbonGroup width={848} pad={22} label="Tools" launcher>
        <Gallery>
          <GalleryItem><TraverseIcon size={80} />Traverse</GalleryItem>
          <GalleryItem><CogoIcon />{'Update\nCOGO'}</GalleryItem>
          <GalleryItem><CulDeSacIcon />Cul-de-sac</GalleryItem>
          <GalleryItem><SplitIcon />{'Split Into\nCOGO Lines'}</GalleryItem>
          <GallerySide>
            <button aria-label="Previous tools"><Chevron size={16} dir={180} width={3} /></button>
            <button aria-label="Next tools"><Chevron size={16} width={3} /></button>
            <button aria-label="All tools"><Icon size={18}><path d="M1 2h14M2 7l6 6 6-6" stroke="#444" strokeWidth="3" /></Icon></button>
          </GallerySide>
        </Gallery>
      </RibbonGroup>
      <RibbonGroup width={466} pad={14} label="Elevation">
        <LargeButton $width={100}><ModeIcon />Mode<Chevron size={16} width={3} /></LargeButton>
        <SmallColumn $left={12} $top={10}>
          <FieldRow>
            <ElevationInput disabled aria-label="Elevation" $height={54} $border="#ebecec" />
            <UnitBox><span>ft</span><Caret size={12} color="#cfd0d0" /></UnitBox>
          </FieldRow>
          <FieldRow>
            <ElevationInput disabled aria-label="Surface" placeholder="No surfaces" $height={60} $border="#c6c8c7" />
            <PlainButton disabled aria-label="Get Z from point" $width={90}><ZPointIcon /></PlainButton>
          </FieldRow>
        </SmallColumn>
      </RibbonGroup>
      <RibbonGroup width={165} label="Corrections">
        <LargeButton $width={162}><NorthIcon />Ground<InlineLabel>To Grid <Chevron size={15} width={3} /></InlineLabel></LargeButton>
      </RibbonGroup>
      <RibbonGroup width={161} label="Data Revi...">
        <LargeButton $width={161}><QualityIcon />{'Manage\nQuality'}</LargeButton>
      </RibbonGroup>
      <CollapseButton aria-label="Collapse ribbon"><Chevron size={26} dir={180} color="#1a1a1a" /></CollapseButton>
    </Ribbon>
  );
}

/* ---------- docks ---------- */

const Workspace = styled.main`
  flex: 1;
  min-height: 0;
  display: grid;
  grid-template-columns: 583px minmax(0, 1fr) 711px 67px;
  column-gap: 16px;
  padding: 17px 0 17px 15px;
`;

const Panel = styled.section`
  display: flex;
  flex-direction: column;
  min-height: 0;
  overflow: hidden;
  background: #f7f9f8;
  border: 2px solid #d3d5d9;
  border-radius: 10px 10px 0 0;
`;

const PanelTitle = styled.div`
  display: flex;
  align-items: center;
  height: 72px;
  padding: 0 ${p => p.$right}px 0 15px;

  h2 {
    flex: 1;
    margin: 0;
    color: #1a1a1a;
    font-size: 38px;
    font-weight: 400;
  }
  button { margin-left: 19px; }
`;

const SearchRow = styled.div`
  display: flex;
  align-items: center;
  gap: 17px;
  margin-top: 5px;
  padding: 0 6px 0 5px;
`;

const SearchBox = styled.label`
  display: flex;
  align-items: center;
  flex: 1;
  gap: 24px;
  height: 60px;
  padding: 0 18px 0 14px;
  background: #fff;
  border: 2px solid #949494;

  input {
    flex: 1;
    min-width: 0;
  }
  input::placeholder {
    color: #5c5c5c;
    font-style: italic;
    opacity: 1;
  }
`;

const ListModes = styled.div`
  display: flex;
  align-items: center;
  margin: 9px 0 0 38px;
`;

const ModeStrip = styled.div`
  display: flex;
  width: 429px;
  overflow: hidden;
  border-bottom: 3px solid #cfcfcf;
`;

const ListMode = styled.button`
  display: grid;
  flex: none;
  place-items: center;
  width: 80px;
  height: 92px;
  border-bottom: 8px solid ${p => (p.$active ? BLUE : 'transparent')};
`;

const Dots = styled.span`
  display: flex;
  gap: 6px;

  i {
    width: 10px;
    height: 10px;
    background: #333;
  }
`;

const TreeHeading = styled.h3`
  margin: 32px 0 14px 38px;
  font-size: 33px;
  font-weight: 600;
  line-height: 44px;
`;

const TreeRow = styled.div`
  display: flex;
  align-items: center;
  height: ${p => p.$height || 60}px;
  margin-right: 3px;
  padding-left: ${p => p.$indent || 0}px;
`;

const Twisty = styled.button`
  width: 17px;
  height: 17px;
  margin-right: ${p => p.$gap}px;
  background: ${p => (p.$hidden ? 'none' : '#5e5e5e')};
  clip-path: polygon(100% 0, 100% 100%, 0 100%);
`;

const LayerLabel = styled.label`
  display: flex;
  align-items: center;
  flex: 1;
  gap: 12px;
  height: 60px;
  padding-left: 2px;
  border: 2px solid ${p => (p.$selected ? BLUE : 'transparent')};
  background: ${p => (p.$selected ? '#c5dbef' : 'none')};
`;

const RootLabel = styled.span`
  margin-left: 14px;
`;

const Check = styled.input`
  appearance: none;
  display: grid;
  place-items: center;
  width: 35px;
  height: 35px;
  background: #fff;
  border: 2px solid #949494;
  border-radius: 5px;

  &:checked::after {
    content: "";
    width: 22px;
    height: 20px;
    background: #444;
    clip-path: polygon(0 55%, 13% 40%, 36% 68%, 88% 0, 100% 12%, 37% 100%);
  }
`;

function Layer({ name, selected, twisty }) {
  return (
    <TreeRow $indent={32}>
      <Twisty $gap={9} $hidden={!twisty} aria-label={`Expand ${name}`} disabled={!twisty} />
      <LayerLabel $selected={selected}><Check type="checkbox" defaultChecked />{name}</LayerLabel>
    </TreeRow>
  );
}

function Contents() {
  return (
    <Panel>
      <PanelTitle $right={15}>
        <h2>Contents</h2>
        <PlainButton aria-label="Options"><Chevron size={20} /></PlainButton>
        <PlainButton aria-label="Auto hide"><Pin /></PlainButton>
        <PlainButton aria-label="Close"><Cross size={26} /></PlainButton>
      </PanelTitle>
      <SearchRow>
        <PlainButton aria-label="Filter"><Funnel /></PlainButton>
        <SearchBox>
          <input aria-label="Search" placeholder="Search" />
          <Magnifier size={34} />
          <Chevron size={20} />
        </SearchBox>
      </SearchRow>
      <ListModes>
        <ModeStrip>
          <ListMode $active aria-label="Drawing order"><TreeIcon /></ListMode>
          <ListMode aria-label="Data source"><CylinderIcon /></ListMode>
          <ListMode aria-label="Selection"><Icon size={60}><SelectShape /></Icon></ListMode>
          <ListMode aria-label="Editing"><PencilIcon /></ListMode>
          <ListMode aria-label="Snapping"><SnapIcon size={58} plus="#4a6f8c" halo="#a9dcf9" /></ListMode>
          <ListMode aria-label="Labeling"><LabelIcon /></ListMode>
        </ModeStrip>
        <PlainButton aria-label="More" $width={100}><Dots><i /><i /><i /></Dots></PlainButton>
      </ListModes>
      <TreeHeading>Drawing Order</TreeHeading>
      <TreeRow $indent={4}><Twisty $gap={13} aria-label="Expand Map" /><MapIcon /><RootLabel>Map</RootLabel></TreeRow>
      <Layer name="GPS_Benchmarks" twisty />
      <TreeRow $height={56} $indent={71}><Icon size={18}><circle cx="8" cy="8" r="7" fill="#8b2f80" stroke="#111" strokeWidth="2" /></Icon></TreeRow>
      <Layer name="Traverse" selected twisty />
      <TreeRow $height={62} $indent={74}><Icon size={44}><path d="M0 6h16" stroke={TEAL} strokeWidth="1.500" /></Icon></TreeRow>
      <Layer name="World Topographic Map" />
      <Layer name="World Hillshade" />
    </Panel>
  );
}

const CenterColumn = styled.div`
  display: grid;
  grid-template-rows: minmax(0, 1fr) minmax(0, 1fr);
  row-gap: 16px;
  min-height: 0;
  padding-bottom: 4px;
`;

const Dock = styled.section`
  display: flex;
  flex-direction: column;
  min-height: 0;
`;

const DockTabs = styled.div`
  display: flex;
  height: ${p => p.$height}px;
  border-bottom: ${p => p.$line}px solid ${p => p.$color};
  padding-right: 14px;

  > :last-child { margin-left: auto; }
`;

const DockTab = styled.div`
  display: flex;
  align-items: center;
  padding: 3px 15px 0;
  border-radius: 10px 10px 0 0;
  background: ${p => p.$bg || 'none'};
  color: ${p => p.$color || '#1a1a1a'};

  > button:first-child {
    display: flex;
    align-items: center;
    gap: 13px;
  }
  > button + button { margin-left: 22px; }
`;

const MapFrame = styled.div`
  position: relative;
  flex: 1;
  min-height: 0;
  border: solid #d3d5d9;
  border-width: 0 2px;
  background: #efebf0;

  > svg {
    width: 100%;
    height: 100%;
  }
`;

const EditToolbar = styled.div`
  position: absolute;
  left: 50%;
  bottom: 30px;
  display: flex;
  height: 132px;
  transform: translateX(-50%);
  background: #f7f9f8;
  border: 6px solid #c9cac9;
  border-radius: 6px;
`;

const ToolSection = styled.div`
  display: flex;
  align-items: center;
  padding: 0 ${p => p.$right}px 0 ${p => p.$left}px;
  gap: ${p => p.$gap || 0}px;

  & + & { border-left: 6px solid #c9cac9; }
`;

const ToolGap = styled.i`
  width: ${p => p.$width}px;
`;

const Tool = styled.button`
  display: grid;
  place-items: center;
  width: 90px;
  height: 90px;
  border: 2px solid ${p => (p.$active ? BLUE : 'transparent')};
  border-radius: 6px;
  background: ${p => (p.$active ? '#c5dbef' : 'none')};
`;

const ToolOptions = styled.button`
  position: absolute;
  right: -26px;
  bottom: -16px;
  display: grid;
  place-items: center;
  width: 40px;
  height: 40px;
  background: #fff;
  border: 2px solid #6e6e6e;
  border-radius: 50%;
`;

const MapNote = styled.button`
  position: absolute;
  right: 16px;
  bottom: 14px;
`;

const StatusBar = styled.div`
  display: flex;
  align-items: center;
  height: 62px;
  padding: 0 13px;
  gap: 12px;
  background: #f7f9f8;
  border: 2px solid #d3d5d9;
  border-top: 0;
`;

const StatusTools = styled.div`
  display: flex;
  align-items: center;
  gap: 9px;
`;

const StatusToggle = styled.button`
  display: grid;
  place-items: center;
  width: ${p => (p.$active ? 48 : 40)}px;
  height: 48px;
  border: ${p => (p.$active ? '2px solid #0f6cb0' : 0)};
  background: ${p => (p.$active ? '#9acbea' : 'none')};
`;

const Coordinates = styled.div`
  display: flex;
  align-items: center;
  justify-content: center;
  flex: 1;
  gap: 28px;
`;

const Faded = styled.span`
  display: flex;
  align-items: center;
  gap: 10px;
  margin: 0 7px;
  color: #999;
`;

const paths = [
  'M772 459L816 721 902 934 951 1017 1020 1160',
  'M620 558L731 652 816 724',
  'M616 767L731 862 902 934',
  'M1065 459L1200 502 1416 583 1526 640',
  'M1200 502L1257 606 1298 730',
  'M1151 753L1212 717 1298 730 1343 757 1453 825 1526 885',
  'M1343 757L1526 640',
  'M1526 640L1524 761 1528 885 1506 1025 1473 1112',
  'M1506 1025L1637 1109',
  'M951 1019L1118 1026 1294 1218',
  'M1020 1160L1294 1229 1449 1246 1686 1268',
  'M1020 1160L875 1198 722 1229 616 1261',
  'M875 1195L878 1268',
  'M616 899L629 951 678 1103 739 1268',
  'M678 1103L616 1209',
  'M1309 1235L1310 1268',
  'M1743 469L1880 503 1964 526 2151 559 2377 628 2665 779',
  'M1661 516L1710 606',
  'M1526 640L1710 606 1845 624 2062 707 2295 804 2513 899 2618 891 2665 779 2754 590',
  'M2151 559L2062 707 1933 968 1879 1112',
  'M2151 559L2295 804 2217 980',
  'M2062 707L2217 980 2513 899',
  'M2295 804L2400 784 2665 779',
  'M2505 464L2466 592 2501 647 2587 687 2665 779',
  'M3028 887L2925 862 2715 944 2684 1089 2641 1221 2606 1268',
  'M1887 1268L1949 1238',
  'M2221 1238L2229 1268',
  'M1751 1238L1770 1268M1833 1238L1821 1268',
];

const buildings = [
  'M1087 736L1277 808 1289 776 1389 815 1378 842 1547 906 1465 1125 1373 1106 1395 1047 1126 943 1099 1012 995 974z',
  'M2171 459L2353 523 2377 459z',
  'M2627 459L2543 606 2645 663 2733 513 3028 684V459z',
  'M3028 978L3007 969 2986 1019 2932 1000 2907 1064 2892 1058 2834 1203 3007 1268H3028z',
];

const stations = [[696, 700], [1128, 1175], [1766, 583]];

const Nodes = ({ at, color = G }) => at.map(([x, y]) => (
  <rect key={`${x}-${y}`} x={x - 3} y={y - 3} width="6" height="6" fill="#a9c7aa" stroke={color} strokeWidth="2.500" />
));

function TraceShape() {
  return (
    <g>
      <path d="M7 73L43 16M7 73h22M51 73h20" stroke="#ecb3a6" strokeWidth="2.500" />
      <path d="M43 16h28v57" stroke="#b4b4b4" strokeWidth="2.500" />
      <path d="M40 63v20M30 73h20" stroke="#b0b0b0" strokeWidth="2.500" />
      <Nodes at={[[43, 16], [71, 16], [71, 73]]} color="#a6cda7" />
    </g>
  );
}

function MapView() {
  return (
    <Dock>
      <DockTabs $height={62} $line={6} $color="#d2d3d7">
        <DockTab $bg="#d2d3d7" $color="#5c5c5c">
          <button><MapIcon />Map</button>
          <PlainButton aria-label="Close Map"><Cross size={25} color="#6e6e6e" /></PlainButton>
        </DockTab>
        <DockTab><button><MapIcon />SDSMT Benchmarks Map</button></DockTab>
        <PlainButton aria-label="View list"><Chevron size={20} /></PlainButton>
      </DockTabs>
      <MapFrame>
        <svg viewBox="616 459 2412 809" preserveAspectRatio="xMidYMid slice" fill="none" role="img" aria-label="Campus map with traverse">
          {buildings.map(d => <path key={d} d={d} fill="#dcdadb" transform="translate(9 10)" />)}
          {buildings.map(d => <path key={d} d={d} fill="#e5e5dd" stroke="#d9d9d1" strokeWidth="3" />)}
          <g stroke="#efeee4" strokeWidth="9">{paths.map(d => <path key={d} d={d} />)}</g>
          <g stroke="#fff" strokeWidth="9" strokeLinecap="round" strokeDasharray="17 17">{paths.map(d => <path key={d} d={d} />)}</g>
          <path d="M1518 459L1661 516 1743 469" stroke="#fff" strokeWidth="10" />
          <path d="M1055 459L696 700 1128 1175 1294 1207 1612 1268M1808 459L1766 583 2481 827 2250 1268" stroke={TEAL} strokeWidth="3" />
          {stations.map(([x, y]) => <circle key={x} cx={x} cy={y} r="7" fill="#8b2f80" stroke="#000" strokeWidth="2.500" />)}
          <path d="M2471 818h20v20h-20z" fill="#f00" />
        </svg>
        <EditToolbar>
          <ToolSection $left={11} $right={27} $gap={10}>
            <Tool $active aria-label="Line"><Icon size={86} box={90}><path d="M12 77L78 11" stroke={G} strokeWidth="2.500" /></Icon></Tool>
            <ToolGap $width={0} />
            <Tool aria-label="Right angle line"><Icon size={86} box={90}><path d="M8 78l35-35 35 35" stroke={GREEN} strokeWidth="2.500" /><Nodes at={[[8, 78], [78, 78]]} color={GREEN} /><path d="M38 38h10v10H38z" fill="#dd4f28" /></Icon></Tool>
            <PlainButton aria-label="Line tools" $width={30}><Caret size={16} color={G} /></PlainButton>
            <ToolGap $width={10} />
            <Tool aria-label="Arc"><Icon size={86} box={90}><path d="M13 73c0-30 20-57 58-57" stroke={G} strokeWidth="2.500" /><Nodes at={[[13, 73], [31, 34]]} color={GREEN} /><path d="M66 11h10v10H66z" fill="#c9623f" /></Icon></Tool>
            <PlainButton aria-label="Arc tools" $width={30}><Caret size={16} color={G} /></PlainButton>
            <ToolGap $width={10} />
            <Tool aria-label="Trace"><Icon size={86} box={90}><TraceShape /></Icon></Tool>
            <PlainButton aria-label="Trace tools" $width={30}><Caret size={16} color={G} /></PlainButton>
          </ToolSection>
          <ToolSection $left={17} $right={16} $gap={9}>
            <Tool $active aria-label="Select vertex"><Icon size={86} box={90}><path d="M28 24l46 35-29-1-17 24z" fill="#fff" stroke={G} strokeWidth="2.500" /></Icon></Tool>
            <Tool aria-label="Reshape">
              <Icon size={86} box={90}>
                <path d="M8 20V6h43v20M50 36h33v43H68" stroke="#aaa" strokeWidth="3" strokeDasharray="5 4" />
                <path d="M8 26h33v20h20v33H8z" fill="#dcefd9" stroke={GREEN} strokeWidth="2.500" />
                <Nodes at={[[8, 26], [41, 26], [41, 46], [61, 46], [61, 79], [8, 79]]} color={GREEN} />
                <path d="M69 5h15v15l-5-5-7 7-4-4 7-7z" fill="#555" />
              </Icon>
            </Tool>
          </ToolSection>
          <ToolSection $left={22} $right={8} $gap={5}>
            <Tool aria-label="Finish"><Icon size={86} box={90}><path d="M10 16h61v57H10z" stroke={G} strokeWidth="2.500" /><Nodes at={[[10, 16], [71, 16], [10, 73], [71, 73]]} /><path d="M33 64l16 16 29-33" stroke="#f7f9f8" strokeWidth="14" /><path d="M33 64l16 16 29-33" stroke="#68ac68" strokeWidth="8" /></Icon></Tool>
            <Tool aria-label="Cancel"><Icon size={86} box={90}><path d="M11 16h60v57H11z" stroke={G} strokeWidth="2.500" /><Nodes at={[[11, 16], [71, 16], [11, 73], [71, 73]]} /><path d="M34 52l27 27M61 52L34 79" stroke="#f7f9f8" strokeWidth="13" /><path d="M34 52l27 27M61 52L34 79" stroke={G} strokeWidth="7" /></Icon></Tool>
          </ToolSection>
          <ToolOptions aria-label="Toolbar options"><Gear size={28} fill="#555" stroke="#444" /></ToolOptions>
        </EditToolbar>
        <MapNote aria-label="Map notes"><NoteIcon /></MapNote>
      </MapFrame>
      <StatusBar>
        <SelectBox $width={250} $pad={14}>
          <select aria-label="Map scale" defaultValue="1:835"><option>1:835</option></select>
          <Caret size={12} />
        </SelectBox>
        <Separator $height={38} />
        <StatusTools>
          <StatusToggle $active aria-label="Snapping"><SnapIcon size={40} /></StatusToggle>
          <StatusToggle aria-label="Grid"><GridIcon /></StatusToggle>
          <StatusToggle aria-label="Dynamic constraints"><DynamicIcon /></StatusToggle>
          <StatusToggle aria-label="Inference"><ConstraintIcon /></StatusToggle>
          <StatusToggle aria-label="Ground to grid"><NorthIcon size={40} /></StatusToggle>
          <PlainButton aria-label="More" $width={40}><Chevron size={22} width={2.5} color="#222" /></PlainButton>
        </StatusTools>
        <Separator $height={38} />
        <Coordinates>1,213,362.00E 647,678.46N ftUS<Chevron size={24} width={2.5} /></Coordinates>
        <Separator $height={38} />
        <Faded><ZoomToIcon color="#b8b8b8" fill="#d9f1f9" glass="#9cc8e6" handle="#e0bd9a" />Selected Features: 0</Faded>
        <Separator $height={38} />
        <PlainButton aria-label="Clear selection" $width={50}><ClearSelIcon size={38} /></PlainButton>
        <Separator $height={38} />
        <PlainButton aria-label="Pause" $width={50}><Icon size={36}><path d="M4 0v16M12 0v16" stroke={G} strokeWidth="4" /></Icon></PlainButton>
        <Separator $height={38} />
        <PlainButton aria-label="Refresh"><RefreshIcon /></PlainButton>
      </StatusBar>
    </Dock>
  );
}

/* ---------- attribute table ---------- */

const TableFrame = styled.div`
  display: flex;
  flex-direction: column;
  flex: 1;
  min-height: 0;
  padding: 4px 2px 0;
  background: #f7f9f8;
  border: 2px solid #d3d5d9;
`;

const TableToolbar = styled.div`
  display: flex;
  align-items: center;
  height: 74px;
  padding: 0 20px 0 14px;
  gap: 23px;
  background: #eff0f2;
  border: 2px solid #bfc0c6;

  > :last-child { margin-left: auto; }
`;

const TableAction = styled.button`
  display: flex;
  align-items: center;
  gap: 9px;
  color: ${p => (p.disabled ? '#c6c7c9' : '#4a4a4a')};
`;

const TableArea = styled.div`
  display: grid;
  grid-template-columns: minmax(0, 1fr) 44px;
  grid-template-rows: minmax(0, 1fr) 43px;
  flex: 1;
  min-height: 0;
  margin-top: 3px;
  background: #fff;
  border: 2px solid #cacaca;
`;

const ScrollBar = styled.div`
  display: flex;
  flex-direction: ${p => (p.$vertical ? 'column' : 'row')};
  align-items: center;
  justify-content: space-between;
  padding: ${p => (p.$vertical ? '12px 0' : '0 12px')};
  background: #f4f4f4;
`;

const ScrollCorner = styled.div`
  background: #ebebeb;
`;

const AttributeTable = styled.table`
  align-self: start;
  border-collapse: collapse;
  table-layout: fixed;
  width: 1243px;
  font-size: 27px;
  line-height: 36px;

  th, td {
    height: 62px;
    padding: 0 12px 0 10px;
    border: 2px solid #cacaca;
    text-align: right;
    white-space: nowrap;
  }
  thead th {
    height: 63px;
    padding: 0 5px 0 10px;
    background: #ebebeb;
    border-top: 0;
    font-size: 26px;
    font-weight: 700;
    text-align: left;
  }
  tr > :first-child { border-left: 0; }
  tbody tr:nth-child(even) { background: #ebebeb; }
  tbody th {
    padding: 0;
    background: #ebebeb;
    font-weight: 400;
    text-align: center;
  }
  td:nth-child(2), td:nth-child(3) {
    padding-right: 0;
    text-align: left;
  }
  td:nth-child(4) { font-size: 26px; }
  thead th.current {
    background: #c8e2f5;
    box-shadow: inset 0 -5px ${BLUE};
  }
  tbody th.current {
    background: #c8e2f5;
    box-shadow: inset -5px 0 ${BLUE};
  }
  td.current { background: #c8e2f5; }
  thead th.corner { background: #fff; padding: 0; }
  tfoot td { text-align: left; }
  tfoot th { background: #ebebeb; border-bottom: 0; }
`;

const CornerMark = styled.span`
  display: block;
  width: 25px;
  height: 25px;
  margin: 22px 0 0 9px;
  background: #c9c9c9;
  clip-path: polygon(100% 0, 100% 100%, 0 100%);
`;

const TableFooter = styled.footer`
  display: flex;
  align-items: center;
  height: 70px;
`;

const FooterButton = styled.button`
  display: grid;
  place-items: center;
  width: ${p => p.$width || 80}px;
  height: 56px;
  border: ${p => (p.$active ? '3px solid #3eb0ec' : 0)};
  background: ${p => (p.$active ? '#c2c2c7' : 'none')};
`;

const FooterGap = styled.span`
  width: ${p => p.$width}px;
`;

const Grow = styled.div`
  flex: 1;
`;

const TimeFilters = styled.div`
  display: flex;
  gap: 8px;
  padding: 8px 5px;
  margin: 0 8px 0 14px;
  background: #eff0f2;
`;

const Zoom = styled.input`
  appearance: none;
  width: 250px;
  height: 28px;
  margin: 0 16px;
  background: linear-gradient(90deg, #a6a6a6 50%, #dedede 50%) center / 100% 8px no-repeat;

  &::-webkit-slider-thumb {
    appearance: none;
    width: 8px;
    height: 28px;
    background: #777;
  }
`;

const columns = [
  ['OBJECTID *', 171], ['Shape *', 145], ['Shape_Length', 204], ['Direction', 144],
  ['Distance', 134], ['Radius', 113], ['Arc Length', 165], ['Radius2', 125],
];
const lengths = ['218.784581', '234.089661', '460.144983', '185.237603', '314.966527', '181.698482'];

function TableView() {
  return (
    <Dock>
      <DockTabs $height={59} $line={5} $color={BLUE}>
        <DockTab $bg={BLUE} $color="#fff">
          <button><SmallTable />Traverse</button>
          <PlainButton aria-label="Close Traverse"><Cross size={24} color="#fff" /></PlainButton>
        </DockTab>
        <PlainButton aria-label="Table list"><Chevron size={20} /></PlainButton>
      </DockTabs>
      <TableFrame>
        <TableToolbar>
          <b>Field:</b>
          <TableAction><SmallTable mark="add" />Add</TableAction>
          <TableAction><SmallTable mark="calc" />Calculate</TableAction>
          <Separator $height={54} />
          <b>Selection:</b>
          <TableAction><SelectAttrIcon />Select By Attributes</TableAction>
          <TableAction disabled><ZoomRowsIcon />Zoom To</TableAction>
          <TableAction><SwitchIcon />Switch</TableAction>
          <TableAction disabled><RowsIcon rows={['#f4f4f5', '#f4f4f5', '#f4f4f5', '#f4f4f5']} color="#c0c1c3" />Clear</TableAction>
          <TableAction disabled><DeleteRowsIcon />Delete</TableAction>
          <TableAction disabled><CopyRowsIcon />Copy</TableAction>
          <PlainButton aria-label="Table menu"><Hamburger /></PlainButton>
        </TableToolbar>
        <TableArea>
          <AttributeTable>
            <colgroup>
              <col width="42" />
              {columns.map(([name, width]) => <col key={name} width={width} />)}
            </colgroup>
            <thead>
              <tr>
                <th className="corner"><CornerMark /></th>
                {columns.map(([name], i) => <th key={name} scope="col" className={i ? '' : 'current'}>{name}</th>)}
              </tr>
            </thead>
            <tbody>
              {lengths.map((length, i) => (
                <tr key={length}>
                  <th scope="row" className={i ? '' : 'current'}>{i + 1}</th>
                  <td className={i ? '' : 'current'}>{i + 16}</td>
                  <td>Polyline Z</td>
                  <td>{length}</td>
                  {columns.slice(3).map(([name]) => <td key={name}>&lt;Null&gt;</td>)}
                </tr>
              ))}
            </tbody>
            <tfoot>
              <tr><th /><td colSpan={8}>Click to add new row.</td></tr>
            </tfoot>
          </AttributeTable>
          <ScrollBar $vertical><Chevron size={16} dir={180} color="#c9c9c9" /><Chevron size={16} color="#c9c9c9" /></ScrollBar>
          <ScrollBar><Chevron size={16} dir={90} color="#c9c9c9" /><Chevron size={16} dir={270} color="#c9c9c9" /></ScrollBar>
          <ScrollCorner />
        </TableArea>
        <TableFooter>
          <FooterButton $active aria-label="Show all records"><RowsIcon rows={['#fff', '#b2e6f8', '#fff', '#b2e6f8']} /></FooterButton>
          <FooterButton $width={88} aria-label="Show selected records"><Icon><path d="M.6 0h14.800v11.500H.6z" fill="#b2e6f8" stroke={G} strokeWidth="1.200" /><path d="M.6 4h14.800M.6 8h14.800M.6.6h14.800" stroke={G} strokeWidth="1.200" /></Icon></FooterButton>
          <FooterButton $width={60} disabled aria-label="First record"><Icon size={26}><path d="M1 0h2v16H1zM15 0v16L4 8z" fill="#bcbcbc" /></Icon></FooterButton>
          <FooterButton $width={56} aria-label="Last record"><Icon size={26}><path d="M13 0h2v16h-2zM1 0v16l11-8z" fill={G} /></Icon></FooterButton>
          <FooterGap $width={16} />
          <span>0 of 6 selected</span>
          <Grow />
          <span>Filters:</span>
          <TimeFilters>
            <Icon><circle cx="8" cy="8" r="7.200" fill="#f7f7f7" stroke="#cdcdcd" /><path d="M5 4l5-1 2 5-3 4-3-2z" fill="#e2ede4" /><path d="M8 3v5h4" stroke="#cdd5dd" /></Icon>
            <Icon><circle cx="8" cy="8" r="7.200" fill="#f7f7f7" stroke="#cdcdcd" /><path d="M9 7l4-1v5l-4 1z" fill="#e2ede4" /><path d="M2 3h9M2 6h7M5 1v6M8 1v6" stroke="#c4ddec" strokeWidth="1.500" strokeDasharray="2 1" /></Icon>
          </TimeFilters>
          <PlainButton aria-label="Filter by selection">
            <Icon><path d="M.6.600h11v1.500L8 7.500v7.500H5.500V7.500l-5-5z" fill="#b5b5b5" stroke={G} /><path d="M7 9h2v2H7zM10 9h2v2h-2zM13 9h2v2h-2zM7 13h2v2H7zM10 13h2v2h-2zM13 13h2v2h-2z" fill={SKY} stroke={SKY} strokeWidth=".5" /></Icon>
          </PlainButton>
          <FooterGap $width={4} />
          <Separator $height={38} />
          <FooterButton $width={62} aria-label="Elevation range"><Icon><path d="M8 0l4.500 4.500H9.500V8h-3V4.500h-3z" fill="#b9d8b7" /><path d="M8 16l4.500-4.500H9.500V8h-3v3.500h-3z" fill="#f1d2a8" /></Icon></FooterButton>
          <PlainButton aria-label="Zoom out" $width={40}><Icon size={18}><path d="M1 8h14" stroke={G} strokeWidth="4" /></Icon></PlainButton>
          <Zoom type="range" aria-label="Table zoom" defaultValue={50} />
          <PlainButton aria-label="Zoom in"><Icon size={22}><path d="M1 8h14M8 1v14" stroke={G} strokeWidth="3" /></Icon></PlainButton>
          <FooterGap $width={18} />
          <SelectBox $width={150} $pad={14} $border="#fff">
            <select aria-label="Zoom level" defaultValue="100%"><option>100%</option></select>
            <Caret size={12} />
          </SelectBox>
          <FooterGap $width={14} />
          <Separator $height={38} />
          <FooterButton $width={68} aria-label="Refresh table"><RefreshIcon /></FooterButton>
        </TableFooter>
      </TableFrame>
    </Dock>
  );
}

/* ---------- modify features ---------- */

const ToolHeading = styled.div`
  display: grid;
  grid-template-columns: 1fr auto 1fr;
  align-items: center;
  height: 54px;
  padding: 0 14px;
  font-size: 33px;

  > button { justify-self: start; }
  > span {
    display: flex;
    align-items: center;
    gap: 10px;
  }
`;

const ModifyTabs = styled.div`
  display: flex;
  align-items: center;
  height: 56px;
  margin-top: 36px;
  padding: 0 12px 0 9px;
  gap: 26px;

  > :last-child { margin-left: auto; }
`;

const ModifyTab = styled.button`
  height: 56px;
  border-bottom: 5px solid ${p => (p.$active ? BLUE : 'transparent')};
  font-size: 30px;
  font-weight: ${p => (p.$active ? 600 : 400)};
  line-height: 50px;
`;

const LayerRow = styled.div`
  display: flex;
  align-items: center;
  gap: 25px;
  margin-top: 25px;
  padding: 0 10px 0 11px;
`;

const SetRow = styled.div`
  display: flex;
  align-items: center;
  height: 125px;
  padding: 14px 0 0 29px;
  overflow: hidden;
`;

const SetButton = styled.button`
  display: flex;
  align-items: center;
  flex: none;
  gap: 19px;
  width: ${p => p.$width}px;
  opacity: ${p => (p.disabled ? 0.6 : 1)};
`;

const ThumbBar = styled.div`
  display: flex;
  flex: none;
  align-items: center;
  height: 42px;
  margin-left: ${p => p.$left || 0}px;
  padding: 0 ${p => p.$right}px;
  background: #ebebeb;

  > div { flex: 1; margin: 0 10px; }
`;

const Thumb = styled.i`
  display: block;
  width: ${p => p.$share}%;
  height: 22px;
  border-radius: 11px;
  background: #b3b3b3;
`;

const GridBox = styled.div`
  display: flex;
  flex-direction: column;
  flex: 1;
  min-height: 0;
  margin: 7px 12px 0;
  border: 2px solid #cacaca;

  > :last-child { margin-top: auto; }
`;

const CourseTable = styled.table`
  width: 100%;
  border-collapse: collapse;
  table-layout: fixed;
  font-size: 27px;

  th, td {
    height: 64px;
    padding: 0 0 0 14px;
    border: 2px solid #cacaca;
    border-bottom-width: 4px;
    text-align: left;
    white-space: nowrap;
    font-weight: 400;
  }
  tr > :last-child { border-right: 0; }
  thead th {
    height: 54px;
    background: #dfdfdf;
    border-top: 0;
    border-bottom-width: 2px;
    color: #333;
  }
  tbody td { background: #fff; }
  tbody tr:nth-child(even) td { background: #ebebeb; }
  tbody td:nth-child(2) { padding: 0 0 0 2px; }
  tbody tr td:first-child {
    background: #dfdfdf;
    border-color: #dfdfdf;
    border-right-color: #cacaca;
  }
  thead th:first-child {
    padding: 0;
    background: #ebebeb;
    border: 0;
  }
  thead th:nth-child(2) {
    padding: 0 0 0 12px;
    border-left: 0;
    border-right: 0;
  }
  thead th:nth-child(3) { border-left: 0; padding-left: 24px; }
`;

const SortLabel = styled.span`
  display: flex;
  align-items: center;
  gap: 12px;
  color: #1a1a1a;
`;

const CourseCorner = styled.span`
  display: block;
  width: 17px;
  height: 15px;
  margin: 30px 0 0 30px;
  background: #5e5e5e;
  clip-path: polygon(100% 0, 100% 100%, 0 100%);
`;

const Summary = styled.dl`
  display: grid;
  grid-template-columns: 268px 1fr;
  grid-auto-rows: 45px;
  align-items: center;
  flex: none;
  height: 184px;
  margin: 9px 12px 12px;
  padding-left: 11px;
  overflow: hidden;
  background: #fff;
  border: 2px solid #cacaca;

  dt, dd { margin: 0; white-space: nowrap; }
`;

const NewRow = styled.div`
  position: relative;
  display: flex;
  justify-content: flex-end;
  padding-right: 12px;
`;

const NewButton = styled.button`
  width: 174px;
  height: 60px;
  background: #fff;
  border: 2px solid #4a4a4a;
`;

const NewNote = styled.button`
  position: absolute;
  right: 16px;
  bottom: -30px;
`;

const HelpLink = styled.a`
  margin: 40px 12px 25px 11px;
  color: #005e95;
  line-height: 40px;
  text-decoration: none;
  white-space: nowrap;
`;

const courses = [
  ['<N70°53\'34"W>', '<218.79>'], ['<N17°57\'49"E>', '<234.09>'], ['<S56°08\'59"W>', '<460.15>'],
  ['<S41°42\'02"E>', '<185.24>'], ['<S78°54\'26"E>', '<314.97>'], ['<N27°40\'09"E>', '<181.7>'],
];

const SetIcon = ({ closing }) => (
  <Icon size={64} box={32}>
    <g transform={closing ? 'translate(38 0) scale(-1 1)' : ''}>
      <rect x="8" y="2" width="17" height="14" rx="4" stroke="#dcdcdc" /><rect x="10" y="3.500" width="13" height="11" rx="3" stroke="#bcbcbc" /><path d="M20 9h11" stroke={G} strokeWidth="1.200" />
      <rect x="12.500" y="5.500" width="7.500" height="7" fill={closing ? '#bddcf1' : '#e8a493'} stroke={closing ? SKY : '#c8512c'} strokeWidth="1.300" />
    </g>
    <path d="M7 14v13M.5 20.500h13" stroke="#f7f9f8" strokeWidth="5" /><path d="M7 14.500v12M1 20.500h12" stroke={GREEN} strokeWidth="3" />
  </Icon>
);

function ModifyFeatures() {
  return (
    <Panel>
      <PanelTitle $right={15}>
        <h2>Modify Features</h2>
        <PlainButton aria-label="Help" $width={28}><b>?</b></PlainButton>
        <PlainButton aria-label="Options"><Chevron size={20} /></PlainButton>
        <PlainButton aria-label="Auto hide"><Pin /></PlainButton>
        <PlainButton aria-label="Close"><Cross size={26} /></PlainButton>
      </PanelTitle>
      <ToolHeading>
        <PlainButton aria-label="Back">
          <Icon size={46}><circle cx="8" cy="8" r="7.400" stroke={G} strokeWidth=".9" /><path d="M12.500 8H4M7.500 4.200L3.800 8l3.700 3.800" stroke={G} strokeWidth="1.500" /></Icon>
        </PlainButton>
        <span><TraverseIcon size={44} />Traverse</span>
      </ToolHeading>
      <ModifyTabs>
        <ModifyTab $active>Lines</ModifyTab>
        <ModifyTab>Closure</ModifyTab>
        <PlainButton aria-label="Menu"><Hamburger /></PlainButton>
      </ModifyTabs>
      <LayerRow>
        <label htmlFor="layer">Layer</label>
        <SelectBox $bg="#eff0f2" $border="#d3d5d9" $color="#8c8c8c">
          <select id="layer" disabled defaultValue="Traverse"><option>Traverse</option></select>
          <Chevron size={15} width={3} />
        </SelectBox>
      </LayerRow>
      <SetRow>
        <SetButton $width={264}><SetIcon />Set Start</SetButton>
        <SetButton $width={308}><SetIcon closing />Set Closing</SetButton>
        <SetButton disabled $width={160}><Icon size={60} box={76}><g transform="translate(-2 -8)"><TraceShape /></g></Icon>Trace</SetButton>
      </SetRow>
      <ThumbBar $right={11}>
        <Chevron size={18} dir={90} color={G} width={2.5} />
        <div><Thumb $share={82} /></div>
        <Chevron size={18} dir={270} color={G} width={2.5} />
      </ThumbBar>
      <GridBox>
        <CourseTable>
          <colgroup><col width="48" /><col width="50" /><col width="250" /><col width="200" /><col /></colgroup>
          <thead>
            <tr>
              <th><CourseCorner /></th>
              <th><Icon size={36}><rect x="1" y="1" width="16" height="14" stroke={G} strokeWidth="1.200" /><path d="M2.500 4H15" stroke={SKY} strokeWidth="1.300" /><path d="M2.500 6.800H15" stroke="#999" strokeDasharray="2 1" /><path d="M2.500 9.500H15" stroke="#c8512c" strokeWidth="1.300" /><path d="M2.500 12.200H15" stroke={G} strokeWidth="1.200" /></Icon></th>
              <th scope="col"><SortLabel>Direction<Chevron size={15} width={3} /></SortLabel></th>
              <th scope="col">Distance</th>
              <th scope="col">Radius</th>
            </tr>
          </thead>
          <tbody>
            {courses.map(([direction, distance]) => (
              <tr key={direction}>
                <td />
                <td><Icon size={44}><path d="M0 7h16" stroke="#6bb89c" strokeWidth="1.600" /></Icon></td>
                <td>{direction}</td>
                <td>{distance}</td>
                <td />
              </tr>
            ))}
          </tbody>
        </CourseTable>
        <ThumbBar $left={49} $right={12}>
          <Chevron size={18} dir={90} color={G} width={2.5} />
          <div><Thumb $share={71} /></div>
          <Chevron size={18} dir={270} color={G} width={2.5} />
        </ThumbBar>
      </GridBox>
      <Summary>
        <dt>Misclose Distance:</dt><dd />
        <dt>Misclose Ratio:</dt><dd />
        <dt>Calculated Area:</dt><dd />
        <dt>Closure Method:</dt><dd>Snap last line to close (default)</dd>
      </Summary>
      <NewRow>
        <NewButton>New</NewButton>
        <NewNote aria-label="Notes"><NoteIcon /></NewNote>
      </NewRow>
      <HelpLink href="#traverse">Learn more about entering traverse dimensions</HelpLink>
    </Panel>
  );
}

const Rail = styled.nav`
  display: flex;
  flex-direction: column;
  gap: 29px;
`;

const RailTab = styled.button`
  height: ${p => p.$height}px;
  border-right: 15px solid #c0c1c6;
  writing-mode: vertical-rl;
  line-height: 52px;
  text-align: left;
`;

const Taskbar = styled.div`
  height: 4px;
  background: linear-gradient(90deg, #2d2018 120px, #f0f0f0 120px, #f0f0f0 840px, #2d2018 840px, #241d1b);
`;

function App() {
  return (
    <Window>
      <GlobalStyle />
      <Header />
      <EditRibbon />
      <Workspace>
        <Contents />
        <CenterColumn>
          <MapView />
          <TableView />
        </CenterColumn>
        <ModifyFeatures />
        <Rail>
          <RailTab $height={103}>Catalog</RailTab>
          <RailTab $height={152}>Symbology</RailTab>
        </Rail>
      </Workspace>
      <Taskbar />
    </Window>
  );
}

export default App;
